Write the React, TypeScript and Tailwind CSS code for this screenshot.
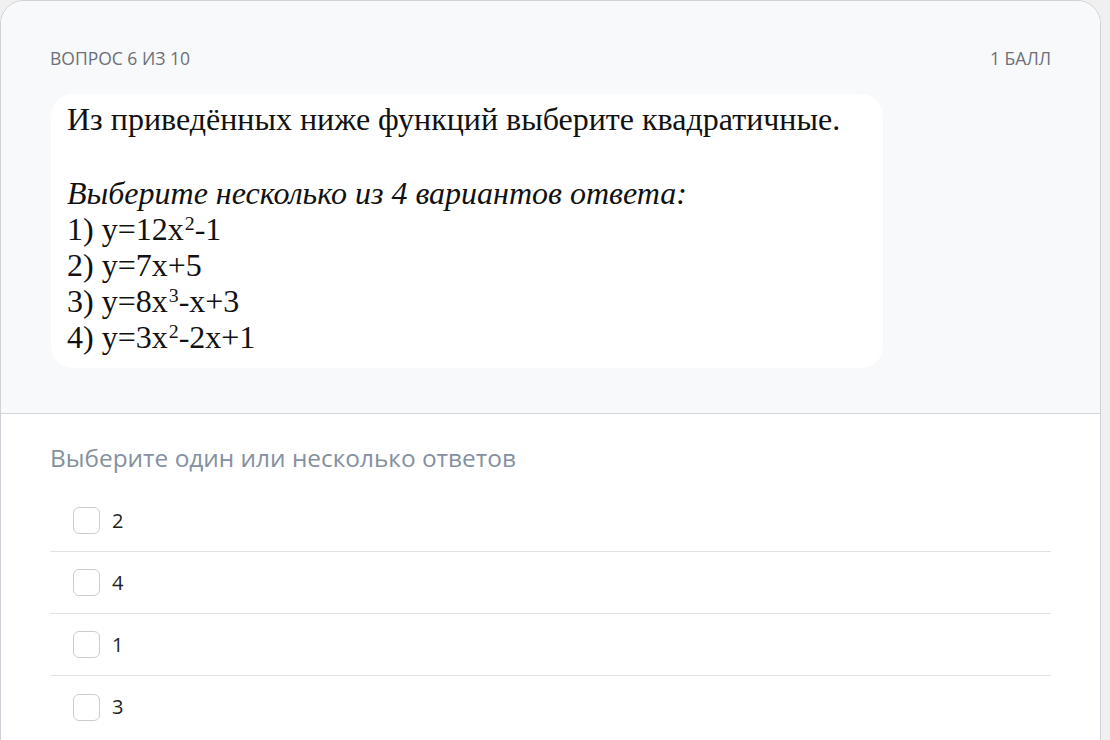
const OPTIONS = ["2", "4", "1", "3"];

const Sup = ({ children }: { children: string }) => (
  <sup className="text-[0.62em] ml-[1px]">{children}</sup>
);

const LINES = [
  <>1) y=12x<Sup>2</Sup>-1</>,
  <>2) y=7x+5</>,
  <>3) y=8x<Sup>3</Sup>-x+3</>,
  <>4) y=3x<Sup>2</Sup>-2x+1</>,
];

export default function App() {
  return (
    <div className="w-[1110px] h-[740px] bg-[#f0f0f0] overflow-hidden font-['Open_Sans',sans-serif]">
      <div className="w-[1101px] h-[760px] bg-white border-[1.5px] border-[#cdd2d9] rounded-t-[24px] overflow-hidden">
        {/* Header */}
        <div className="bg-[#f8f9fb] border-b-[1.5px] border-[#d3d8de] px-[49px] pt-[46px] pb-[45px]">
          <div className="flex items-center justify-between text-[17.5px] leading-[22px] text-[#6b7079]">
            <span>ВОПРОС 6 ИЗ 10</span>
            <span>1 БАЛЛ</span>
          </div>
          <div className="mt-[25px] ml-[1px] w-[832px] h-[274px] bg-white rounded-[22px] pl-[16px] pt-[7px] font-['Liberation_Serif',serif] text-[32px] leading-[36px] text-[#111]">
            <p>Из приведённых ниже функций выберите квадратичные.</p>
            <p className="mt-[38px] italic">Выберите несколько из 4 вариантов ответа:</p>
            {LINES.map((l, i) => (
              <p key={i}>{l}</p>
            ))}
          </div>
        </div>

        {/* Answers */}
        <div className="px-[49px] pt-[28px]">
          <p className="text-[24.4px] leading-[32px] text-[#8590a0]">Выберите один или несколько ответов</p>
          <div className="mt-[16px]">
            {OPTIONS.map((o, i) => (
              <div
                key={o}
                className={`h-[62px] flex items-center gap-[12px] pl-[23px] ${i < OPTIONS.length - 1 ? "border-b border-[#dfe2e6]" : ""}`}
              >
                <span className="w-[27px] h-[27px] rounded-[6px] border border-[#c9cdd2] bg-white" />
                <span className="text-[20px] text-[#222]">{o}</span>
              </div>
            ))}
          </div>
        </div>
      </div>
    </div>
  );
}
